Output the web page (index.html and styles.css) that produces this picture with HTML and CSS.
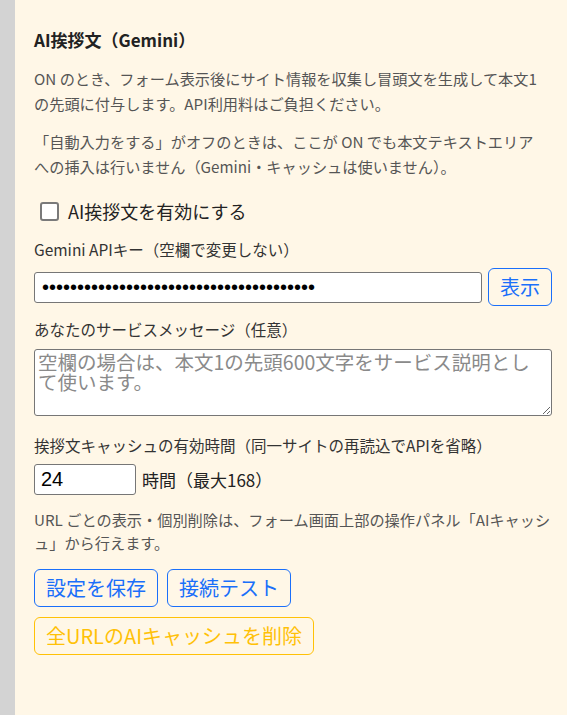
FILE: index.html
```html
<!DOCTYPE html>
<html lang="ja">
<head>
<meta charset="utf-8">
<title>AI挨拶文</title>
<link rel="stylesheet" href="styles.css">
</head>
<body>
<div class="page">
  <div class="rail"></div>
  <section class="panel">
    <h2 class="title">AI挨拶文（Gemini）</h2>
    <p class="desc">ON のとき、フォーム表示後にサイト情報を収集し冒頭文を生成して本文1の先頭に付与します。API利用料はご負担ください。</p>
    <p class="desc">「自動入力をする」がオフのときは、ここが ON でも本文テキストエリアへの挿入は行いません（Gemini・キャッシュは使いません）。</p>
    <label class="check-row">
      <input type="checkbox" class="check">
      <span class="check-text">AI挨拶文を有効にする</span>
    </label>
    <div class="field-label">Gemini APIキー（空欄で変更しない）</div>
    <div class="key-row">
      <input type="password" class="text-input key-input" value="abcdefghijklmnopqrstuvwxyz0123456789abc">
      <button class="btn btn-blue">表示</button>
    </div>
    <div class="field-label label-service">あなたのサービスメッセージ（任意）</div>
    <textarea class="textarea" placeholder="空欄の場合は、本文1の先頭600文字をサービス説明として使います。"></textarea>
    <div class="field-label label-cache">挨拶文キャッシュの有効時間（同一サイトの再読込でAPIを省略）</div>
    <div class="num-row">
      <input type="text" class="text-input num-input" value="24">
      <span class="num-unit">時間（最大168）</span>
    </div>
    <p class="note">URL ごとの表示・個別削除は、フォーム画面上部の操作パネル「AIキャッシュ」から行えます。</p>
    <div class="actions">
      <button class="btn btn-blue">設定を保存</button>
      <button class="btn btn-blue">接続テスト</button>
      <button class="btn btn-yellow">全URLのAIキャッシュを削除</button>
    </div>
  </section>
</div>
</body>
</html>
```

FILE: styles.css
```css
html, body {
  margin: 0;
  padding: 0;
  background: #fff7e7;
}
body {
  font-family: "Noto Sans CJK JP", "Noto Sans", sans-serif;
  color: #333;
}
.page {
  display: flex;
  min-height: 715px;
}
.rail {
  width: 15px;
  flex: none;
  background: #d3d3d3;
}
.panel {
  flex: 1;
  padding: 28px 15px 40px 19px;
  display: flex;
  flex-direction: column;
  align-items: stretch;
}
.title {
  margin: 0;
  font-size: 17px;
  line-height: 24px;
  font-weight: 700;
  color: #222;
}
.desc {
  margin: 14px 0 0;
  padding-right: 6px;
  font-size: 15.2px;
  line-height: 24.5px;
  color: #555;
}
.check-row {
  margin-top: 20px;
  height: 26px;
  display: flex;
  align-items: center;
}
.check {
  appearance: none;
  -webkit-appearance: none;
  width: 19px;
  height: 19px;
  margin: 0 0 0 6px;
  border: 2px solid #7a7a7a;
  border-radius: 3px;
  background: #fff;
  box-sizing: border-box;
}
.check-text {
  margin-left: 9px;
  font-size: 18px;
  color: #222;
}
.field-label {
  margin-top: 14px;
  font-size: 15.5px;
  line-height: 22px;
  color: #333;
}
.label-service {
  margin-top: 12px;
}
.label-cache {
  margin-top: 18px;
}
.key-row {
  margin-top: 8px;
  display: flex;
  align-items: center;
  gap: 6px;
  height: 38px;
}
.text-input {
  box-sizing: border-box;
  height: 31px;
  border: 1px solid #767676;
  border-radius: 3px;
  background: #fff;
  font-family: "Liberation Sans", "Noto Sans CJK JP", sans-serif;
  font-size: 20px;
  color: #000;
  padding: 0 6px;
  margin: 0;
}
.key-input {
  flex: 1;
  min-width: 0;
  padding-left: 7px;
}
.textarea {
  display: block;
  box-sizing: border-box;
  margin-top: 9px;
  width: 100%;
  height: 67px;
  border: 1px solid #767676;
  border-radius: 3px;
  background: #fff;
  padding: 2px 3px;
  font-family: "Noto Sans CJK JP", sans-serif;
  font-size: 19.5px;
  line-height: 20px;
  resize: vertical;
}
.textarea::placeholder {
  color: #8a8a8a;
}
.num-row {
  margin-top: 8px;
  display: flex;
  align-items: center;
  gap: 6px;
}
.num-input {
  width: 102px;
  padding-left: 6px;
}
.num-unit {
  font-size: 17px;
  color: #222;
}
.note {
  margin: 13px 0 0;
  font-size: 15.2px;
  line-height: 23px;
  color: #555;
}
.actions {
  margin-top: 15px;
  display: flex;
  flex-wrap: wrap;
  gap: 10px 9px;
}
.btn {
  box-sizing: border-box;
  height: 38px;
  padding: 0 11px;
  margin: 0;
  background: transparent;
  border: 1px solid;
  border-radius: 6px;
  font-family: "Noto Sans CJK JP", sans-serif;
  font-size: 20px;
  line-height: 1;
  cursor: pointer;
}
.btn-blue {
  color: #1a6ffa;
  border-color: #1a6ffa;
}
.btn-yellow {
  color: #ffc107;
  border-color: #ffc107;
}
```
